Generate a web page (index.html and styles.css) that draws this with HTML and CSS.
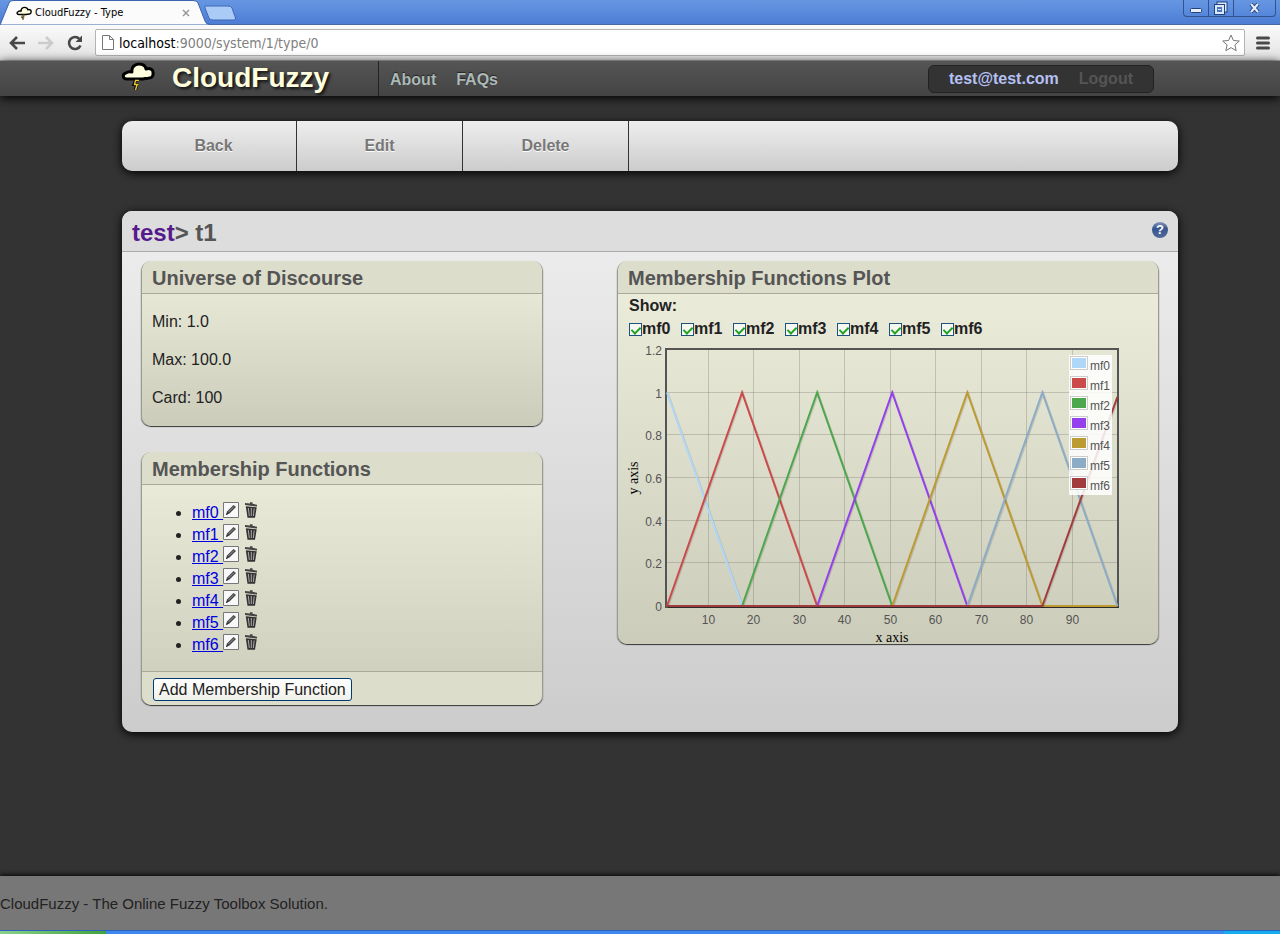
FILE: index.html
```
<!DOCTYPE html>
<html lang="en">
<head>
<meta charset="utf-8">
<title>CloudFuzzy - Type</title>
<link rel="stylesheet" href="styles.css">
</head>
<body>
<svg class="defs" aria-hidden="true">
  <symbol id="cloud" viewBox="0 0 34 30">
    <path d="M6 17C1.500 17 1 12 5 11C6.500 9.500 9 9.500 11 10C10 5 14 2 18 2C22 2 24.500 4 25 7C29 5.500 32.500 8 32 11C32.500 15 30 16 28 16C26 17 25 16.500 24 16.500L22 17Z" fill="#ffffdf" stroke="#000" stroke-width="3" stroke-linejoin="round"/>
    <path d="M14.500 18.500H18M14.500 18.500L13 22.500H17.500M15.500 23L14.500 28" fill="none" stroke="#000" stroke-width="3"/>
    <path d="M14 18.500H18M14.500 18.500L13.500 22.500H17.500M16 23L14.500 28" fill="none" stroke="#e8c83a" stroke-width="1.400"/>
  </symbol>
  <symbol id="pencil" viewBox="0 0 16 16">
    <path d="M.5.5H15.500V15.500H.5Z" fill="#f8f8fa" stroke="#777"/>
    <path d="M3 13L4 9.500L10.500 3L13 5L6.500 11.500Z" fill="#444"/>
    <path d="M5.500 10L11 4.500" stroke="#999"/>
    <path d="M3 13L4 11L5 12Z" fill="#111"/>
  </symbol>
  <symbol id="trash" viewBox="0 0 12 16">
    <path d="M0 1L5 1.500V.3H7.500V1.800L12 2.800V4.500L0 3Z" fill="#444"/>
    <path d="M.8 4.300L11.700 5.200L10 15.700H2.500Z" fill="#333"/>
    <path d="M3.300 6L4.300 14M6.300 6V14M9.200 6.500L8.300 14" stroke="#aaa" stroke-width="1"/>
  </symbol>
</svg>

<div class="titlebar">
  <svg class="tab-shape" width="240" height="25" viewBox="0 0 240 25" aria-hidden="true">
    <path d="M0 25L9 3Q10 .5 13 .5H193Q197 .5 198 3L205 21Q206 24.500 210 24.500V25Z" fill="#fbfbfb" stroke="#3d63ae"/>
    <path d="M205 6H228Q231 6 232 8L235.500 18Q236 20 234 20H213Q210 20 209 18L205 8Z" fill="#a9cbf6" stroke="#3f68b6"/>
  </svg>
  <div class="tab">
    <svg width="16" height="15"><use href="#cloud"/></svg>
    <span class="tab-title">CloudFuzzy - Type</span>
    <button class="tab-close" aria-label="Close tab"><svg width="8" height="8" viewBox="0 0 8 8"><path d="M1 1L7 7M7 1L1 7" stroke="#999" stroke-width="1.500"/></svg></button>
  </div>
  <div class="window-buttons">
    <button aria-label="Minimize"><svg width="24" height="16" viewBox="0 0 24 16"><rect x="6.500" y="8.500" width="11" height="4" rx="1" fill="#e6effc" stroke="#21427c"/></svg></button>
    <button aria-label="Restore"><svg width="24" height="16" viewBox="0 0 24 16"><g fill="none"><path d="M9.500 5V3.500H16.500V10.500H15" stroke="#21427c" stroke-width="4"/><path d="M9.500 5V3.500H16.500V10.500H15" stroke="#dce9fb" stroke-width="2"/><rect x="7" y="6" width="7" height="7" stroke="#21427c" stroke-width="4"/><rect x="7" y="6" width="7" height="7" fill="#4b76c0" stroke="#dce9fb" stroke-width="2"/><path d="M9 9.500H12" stroke="#dce9fb"/></g></svg></button>
    <button class="wide" aria-label="Close window"><svg width="24" height="16" viewBox="0 0 24 16"><path d="M8 4L15 12M15 4L8 12" stroke="#21427c" stroke-width="4"/><path d="M8 4L15 12M15 4L8 12" stroke="#e8f0fc" stroke-width="2"/></svg></button>
  </div>
</div>

<div class="toolbar">
  <button aria-label="Back"><svg width="18" height="18" viewBox="0 0 18 18"><path d="M17 9H3M9 3L3 9L9 15" fill="none" stroke="#484848" stroke-width="2.600"/></svg></button>
  <button aria-label="Forward"><svg width="18" height="18" viewBox="0 0 18 18"><path d="M1 9H15M9 3L15 9L9 15" fill="none" stroke="#ccc" stroke-width="2.600"/></svg></button>
  <button aria-label="Reload"><svg width="18" height="18" viewBox="0 0 18 18"><path d="M14.500 11.500A6 6 0 1 1 13.500 5" fill="none" stroke="#484848" stroke-width="2.600"/><path d="M16 1.500V8H9.500Z" fill="#484848"/></svg></button>
  <div class="address">
    <svg width="12" height="15" viewBox="0 0 12 15" aria-hidden="true"><path d="M.5.5H7.500L11.500 4.500V14.500H.5ZM7.500.5V4.500H11.500" fill="#fff" stroke="#777"/></svg>
    <a class="url" href="#">localhost<span>:9000/system/1/type/0</span></a>
    <button aria-label="Bookmark"><svg width="18" height="18" viewBox="0 0 18 18"><path d="M9 1L11.400 6.500L17.300 7L12.900 10.900L14.200 16.700L9 13.600L3.800 16.700L5.100 10.900L.7 7L6.600 6.500Z" fill="#fff" stroke="#777"/></svg></button>
  </div>
  <button aria-label="Menu"><svg width="14" height="14" viewBox="0 0 14 14"><path d="M1.500 2H12.500M1.500 7H12.500M1.500 12H12.500" stroke="#4a4a4a" stroke-width="3" stroke-linecap="round"/></svg></button>
</div>

<header class="site-header">
  <a class="brand" href="#"><svg width="34" height="30"><use href="#cloud"/></svg><span>CloudFuzzy</span></a>
  <nav class="site-nav"><a href="#">About</a><a href="#">FAQs</a></nav>
  <div class="account"><a class="user" href="#">test@test.com</a><a class="logout" href="#">Logout</a></div>
</header>

<main>
  <nav class="actions"><a href="#">Back</a><a href="#">Edit</a><a href="#">Delete</a></nav>

  <section class="panel">
    <header class="panel-head">
      <h1><a href="#">test</a>&gt; t1</h1>
      <button class="help" aria-label="Help">?</button>
    </header>
    <div class="columns">
      <div class="left">
        <section class="card">
          <h2>Universe of Discourse</h2>
          <div class="facts"><p>Min: 1.0</p><p>Max: 100.0</p><p>Card: 100</p></div>
        </section>
        <section class="card">
          <h2>Membership Functions</h2>
          <ul id="functions"></ul>
          <div class="card-foot"><button class="add">Add Membership Function</button></div>
        </section>
      </div>
      <section class="card plot">
        <h2>Membership Functions Plot</h2>
        <p class="show">Show:</p>
        <div class="checks" id="checks"></div>
        <svg id="chart" width="540" height="304" viewBox="618 340 540 304" role="img" aria-label="Membership functions"></svg>
      </section>
    </div>
  </section>
</main>

<footer class="site-footer">CloudFuzzy - The Online Fuzzy Toolbox Solution.</footer>
<div class="taskbar"><span class="start"></span><span class="tray"></span></div>
<script src="script.js"></script>
</body>
</html>
```
FILE: styles.css
```
* { box-sizing: border-box; }
body {
  margin: 0;
  min-height: 100vh;
  display: flex;
  flex-direction: column;
  background: #333;
  color: #222;
  font: 16px/22px "Liberation Sans", Arial, sans-serif;
}
a { text-decoration: none; }
button { border: 0; padding: 0; background: none; font: inherit; color: inherit; }
svg { display: block; flex: none; }
.defs { position: absolute; width: 0; height: 0; }

.titlebar {
  position: relative;
  display: flex;
  justify-content: space-between;
  height: 25px;
  background: linear-gradient(#6797e2, #4d7dd4);
  border-bottom: 1px solid #46679f;
}
.tab-shape { position: absolute; left: 0; top: 0; }
.tab {
  position: relative;
  display: flex;
  align-items: center;
  gap: 3px;
  width: 192px;
  padding: 2px 0 0 16px;
  font: 11px/16px "DejaVu Sans Condensed", "DejaVu Sans", sans-serif;
  color: #000;
}
.tab-title { flex: 1; white-space: nowrap; }
.tab-close { margin-right: 2px; }
.window-buttons {
  display: flex;
  height: 17px;
  margin-right: 4px;
  border: 1px solid #31548f;
  border-top: 0;
  border-radius: 0 0 4px 4px;
}
.window-buttons button { width: 25px; display: flex; justify-content: center; border-right: 1px solid #31548f; }
.window-buttons .wide { width: 41px; border-right: 0; }

.toolbar {
  display: flex;
  align-items: center;
  gap: 11px;
  height: 36px;
  padding: 0 10px 0 8px;
  background: linear-gradient(#fafafa, #e3e3e3);
  border-bottom: 1px solid #b0b0b0;
}
.address {
  flex: 1;
  display: flex;
  align-items: center;
  gap: 5px;
  height: 27px;
  padding: 0 4px 0 6px;
  background: #fff;
  border: 1px solid #b3b3b3;
  border-radius: 2px;
}
.url { flex: 1; color: #000; font: 14px/20px "DejaVu Sans Condensed", "DejaVu Sans", sans-serif; }
.url span { color: #808080; }

.site-header {
  position: relative;
  display: flex;
  align-items: center;
  height: 35px;
  padding: 0 126px 0 121px;
  background: linear-gradient(#555, #444);
  box-shadow: 0 2px 10px #000;
  font-weight: bold;
}
.brand {
  display: flex;
  align-items: flex-start;
  align-self: stretch;
  gap: 17px;
  width: 258px;
  padding-top: 1px;
  border-right: 1px solid #222;
  color: #ffffdf;
  font-size: 28px;
  line-height: 32px;
  text-shadow: 2px 2px 3px #111;
}
.site-nav { flex: 1; display: flex; gap: 20px; padding: 2px 0 0 11px; }
.site-nav a { color: #abb9b7; text-shadow: 0 -1px 1px #222; }
.account {
  display: flex;
  gap: 20px;
  height: 28px;
  padding: 2px 20px;
  border: 1px solid #222;
  border-radius: 6px;
  background: #333;
}
.user { color: #b5c0f3; }
.logout { color: #555; }

main { flex: 1; padding: 25px 102px 40px 122px; }
.actions {
  display: flex;
  height: 50px;
  margin-bottom: 40px;
  border-radius: 10px;
  background: linear-gradient(#eee, #ccc);
  box-shadow: 0 2px 10px #000;
}
.actions a {
  width: 166px;
  border-right: 1px solid #333;
  color: #777;
  font-weight: bold;
  line-height: 50px;
  text-align: center;
  text-shadow: 0 1px 0 #fff;
}
.actions a:first-child { width: 175px; padding-left: 9px; }

.panel {
  border-radius: 10px;
  background: linear-gradient(#eee, #ccc);
  box-shadow: 0 2px 10px #000;
}
.panel-head {
  display: flex;
  justify-content: space-between;
  align-items: center;
  height: 41px;
  padding: 0 10px;
  border-bottom: 1px solid #aaa;
  border-radius: 10px 10px 0 0;
  background: #ddd;
}
h1 { margin: 0; font-size: 24px; line-height: 32px; color: #555; padding-top: 4px; }
h1 a { color: #551a8b; }
.help {
  width: 16px;
  height: 16px;
  margin-bottom: 2px;
  border-radius: 50%;
  background: linear-gradient(#8797b8, #36558f 40%, #536a9a);
  color: #fff;
  font-size: 13px;
  font-weight: bold;
  line-height: 16px;
}
.columns {
  display: flex;
  justify-content: space-between;
  align-items: flex-start;
  gap: 20px;
  padding: 9px 19px 27px;
}
.left { flex: 0 1 402px; display: flex; flex-direction: column; gap: 26px; }
.card {
  border: solid #9a9a8e;
  border-width: 0 1px;
  border-radius: 10px;
  background: linear-gradient(#eeeedd, #ccccbb);
  box-shadow: 0 1px 1px #333;
}
h2 {
  margin: 0;
  height: 33px;
  padding: 2px 10px 0;
  border-bottom: 1px solid #aaa99a;
  border-radius: 10px 10px 0 0;
  background: #ddddcb;
  color: #555;
  font-size: 20px;
  line-height: 31px;
}
.facts { padding: 17px 10px 17px; display: flex; flex-direction: column; gap: 16px; }
.facts p { margin: 0; }
ul { margin: 0; padding: 17px 0 15px 50px; }
li a { color: #0000e0; text-decoration: underline; }
.row { display: flex; height: 22px; }
.row > a { white-space: pre; }
.row button { align-self: flex-start; margin-right: 6px; }
.card-foot {
  height: 34px;
  padding: 6px 11px;
  border-top: 1px solid #aaa99a;
  border-radius: 0 0 10px 10px;
  background: #ddddcb;
}
.add {
  display: block;
  height: 23px;
  padding: 0 5px;
  border: 1px solid #003c74;
  border-radius: 3px;
  background: linear-gradient(#fff, #f0f0ea);
  line-height: 21px;
  white-space: nowrap;
}
.plot { flex: 0 0 542px; }
.show { margin: 0; padding: 1px 11px; font-weight: bold; }
.checks { display: flex; gap: 12px; height: 22px; padding-left: 11px; font-weight: bold; }
.checks label { display: flex; align-items: center; width: 40px; }
.checks input {
  appearance: none;
  flex: none;
  display: flex;
  justify-content: center;
  align-items: flex-start;
  width: 13px;
  height: 13px;
  margin: 0;
  padding-top: 1px;
  border: 1px solid #1c5180;
  background: #f7f7f2;
}
.checks input:checked::after {
  content: "";
  width: 4px;
  height: 7px;
  border: solid #21a121;
  border-width: 0 2px 2px 0;
  transform: rotate(45deg);
}
.tick { font: 12px "Liberation Sans", Arial, sans-serif; fill: #545454; }
.axis { font: 14px "Liberation Serif", "Times New Roman", serif; fill: #000; }
.legend { font: 12px "Liberation Sans", Arial, sans-serif; fill: #545454; }

.site-footer {
  position: relative;
  padding: 17px 0 15px;
  background: #777;
  box-shadow: 0 -1px 5px #000;
  font-size: 15px;
}
.taskbar { position: relative; display: flex; justify-content: space-between; height: 4px; background: #3e87ed; border-top: 1px solid #2c62bd; }
.start { width: 106px; background: linear-gradient(90deg, #8bd08e, #3fa33c); }
.tray { width: 56px; background: #16adf0; }
```
FILE: script.js
```
const colors = ['#afd8f8', '#cb4b4b', '#4da74d', '#9440ed', '#bd9b33', '#8cacc6', '#a23c3c'];
const names = colors.map((c, i) => 'mf' + i);

document.getElementById('functions').innerHTML = names.map(n =>
  `<li><div class="row"><a href="#">${n} </a><button aria-label="Edit ${n}"><svg width="16" height="16"><use href="#pencil"/></svg></button><button aria-label="Delete ${n}"><svg width="12" height="16"><use href="#trash"/></svg></button></div></li>`).join('');

document.getElementById('checks').innerHTML = names.map(n =>
  `<label><input type="checkbox" checked>${n}</label>`).join('');

const px = v => 667 + (v - 1) * 4.55;
const py = v => 606 - v * 213.5;
let out = '';
for (let v = 10; v <= 90; v += 10) {
  const x = Math.round(px(v)) + 0.5;
  out += `<path d="M${x} 350V606" stroke="#545454" stroke-opacity=".25"/><text class="tick" x="${x}" y="624" text-anchor="middle">${v}</text>`;
}
for (let i = 0; i <= 6; i++) {
  const y = Math.round(py(i / 5)) - 0.5;
  out += `<path d="M667 ${y}H1118" stroke="#545454" stroke-opacity=".25"/><text class="tick" x="662" y="${y + 5}" text-anchor="end">${i / 5}</text>`;
}
out += '<rect x="666" y="349" width="452" height="258" fill="none" stroke="#545454" stroke-width="2"/>';
const line = (i, values) => {
  const pts = values.map(([x, y]) => px(x) + ',' + py(y)).join(' ');
  return `<polyline points="${pts}" transform="translate(1 1)" fill="none" stroke="#000" stroke-opacity=".12" stroke-width="2"/><polyline points="${pts}" fill="none" stroke="${colors[i]}" stroke-width="2"/>`;
};
names.forEach((n, i) => {
  const c = 1 + i * 16.5;
  const values = [];
  if (i > 0) {
    values.push([1, 0]);
    values.push([c - 16.5, 0]);
  }
  values.push([c, i === 6 ? 0.98 : 1]);
  if (i < 6) values.push([c + 16.5, 0]);
  if (i < 5) values.push([100, 0]);
  out += line(i, values);
});
out += '<rect x="1069" y="355" width="43" height="140" fill="#fff" fill-opacity=".85"/>';
names.forEach((n, i) => {
  const y = 356 + i * 20;
  out += `<rect x="1070.5" y="${y + 0.5}" width="17" height="13" fill="#fff" stroke="#ccc"/><rect x="1072" y="${y + 2}" width="14" height="10" fill="${colors[i]}"/><text class="legend" x="1090" y="${y + 14}">${n}</text>`;
});
out += '<text class="axis" x="892" y="642" text-anchor="middle">x axis</text><text class="axis" transform="translate(638 478) rotate(-90)" text-anchor="middle">y axis</text>';
document.getElementById('chart').innerHTML = out;
```
